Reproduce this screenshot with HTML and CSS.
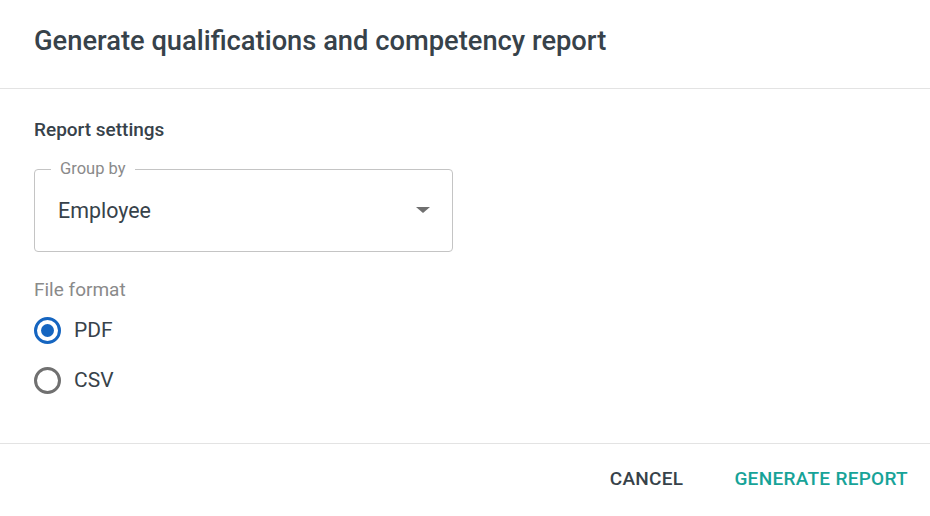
FILE: index.html
```html
<!DOCTYPE html>
<html>
<head>
<meta charset="utf-8">
<link rel="stylesheet" href="styles.css">
</head>
<body>
<div class="dialog">
  <header class="dialog-header">
    <h1 class="title">Generate qualifications and competency report</h1>
  </header>
  <main class="dialog-body">
    <h2 class="section-title">Report settings</h2>
    <fieldset class="select-field">
      <legend class="select-legend">Group by</legend>
      <span class="select-value">Employee</span>
      <span class="select-arrow"></span>
    </fieldset>
    <div class="format-label">File format</div>
    <div class="radio-group">
      <label class="radio-row">
        <span class="radio checked"><span class="radio-dot"></span></span>
        <span class="radio-text">PDF</span>
      </label>
      <label class="radio-row">
        <span class="radio"></span>
        <span class="radio-text">CSV</span>
      </label>
    </div>
  </main>
  <footer class="dialog-footer">
    <button class="btn btn-cancel">CANCEL</button>
    <button class="btn btn-primary">GENERATE REPORT</button>
  </footer>
</div>
</body>
</html>
```

FILE: styles.css
```css
* { box-sizing: border-box; }
html, body { margin: 0; padding: 0; background: #fff; }
body {
  font-family: Roboto, "Liberation Sans", sans-serif;
  color: #37424a;
  width: 930px;
  height: 516px;
  overflow: hidden;
}
.dialog { display: flex; flex-direction: column; height: 516px; }
.dialog-header {
  height: 89px;
  border-bottom: 1px solid #e3e3e3;
  padding: 25px 34px 0;
}
.title {
  margin: 0;
  font-size: 27.3px;
  font-weight: 500;
  line-height: 32px;
  color: #37424a;
  letter-spacing: 0;
}
.dialog-body {
  padding: 29px 34px 0;
  height: 355px;
  border-bottom: 1px solid #e3e3e3;
}
.section-title {
  margin: 0;
  font-size: 19px;
  font-weight: 500;
  line-height: 24px;
  color: #37424a;
}
.select-field {
  margin: 19px 0 0;
  width: 419px;
  height: 91px;
  border: 1px solid #c4c4c4;
  border-radius: 4px;
  padding: 0 22px 0 23px;
  display: flex;
  align-items: center;
  justify-content: space-between;
}
.select-legend {
  font-size: 16.5px;
  color: #8a8a8a;
  padding: 0 9px 0 9px;
  margin-left: -7px;
  line-height: 16px;
}
.select-value {
  font-size: 21.4px;
  color: #37424a;
  margin-top: -8px;
  letter-spacing: 0;
}
.select-arrow {
  width: 0; height: 0;
  border-left: 7px solid transparent;
  border-right: 7px solid transparent;
  border-top: 6px solid #707070;
  margin-top: -9px;
}
.format-label {
  margin-top: 26px;
  font-size: 19px;
  color: #8a8a8a;
  line-height: 24px;
}
.radio-group { display: flex; flex-direction: column; gap: 26px; margin-top: 16px; }
.radio-row { display: flex; align-items: center; gap: 13px; height: 24px; }
.radio {
  width: 27px; height: 27px;
  border: 3px solid #707070;
  border-radius: 50%;
  display: flex; align-items: center; justify-content: center;
}
.radio.checked { border-color: #1565c0; }
.radio-dot { width: 13px; height: 13px; border-radius: 50%; background: #1565c0; }
.radio-text { font-size: 21px; color: #37424a; }
.dialog-footer {
  flex: 1;
  display: flex;
  justify-content: flex-end;
  align-items: center;
  gap: 51px;
  padding: 0 22px 4px 0;
}
.btn {
  border: none;
  background: none;
  font-family: Roboto, "Liberation Sans", sans-serif;
  font-size: 19px;
  font-weight: 500;
  padding: 0;
  letter-spacing: 0.3px;
}
.btn-cancel { color: #37424a; }
.btn-primary { color: #17a398; }
```
